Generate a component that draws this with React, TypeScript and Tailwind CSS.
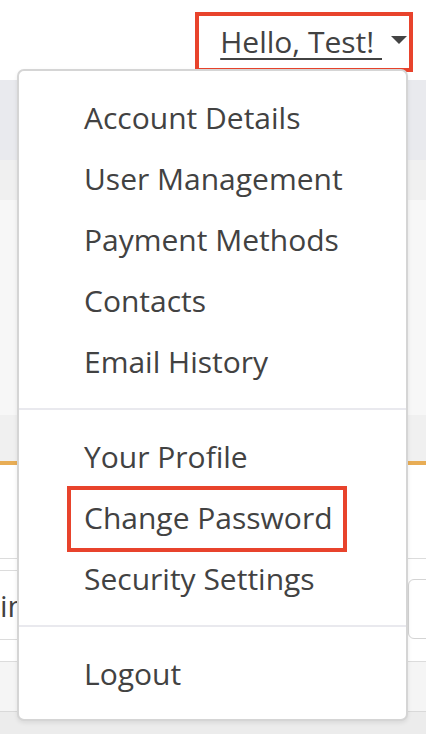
import React from 'react';

const groups: string[][] = [
  ['Account Details', 'User Management', 'Payment Methods', 'Contacts', 'Email History'],
  ['Your Profile', 'Change Password', 'Security Settings'],
  ['Logout'],
];

const App: React.FC = () => {
  return (
    <div
      className="relative w-[426px] h-[734px] overflow-hidden bg-white text-[#424242]"
      style={{ fontFamily: '"Open Sans", "Noto Sans", sans-serif' }}
    >
      {/* Page behind the menu */}
      <div className="flex flex-col h-full">
        <header className="h-[80px] flex items-start justify-end pr-[13px] pt-[12px] bg-white">
          <button className="relative flex items-center gap-[9px] h-[60px] pl-[25px] pr-[6px]">
            <span className="text-[30px] leading-none underline underline-offset-[5px] decoration-[2px] whitespace-pre">Hello, Test! </span>
            <svg width="16" height="8" viewBox="0 0 16 8" className="mb-[4px]">
              <path d="M0 0 L16 0 L8 8 Z" fill="#444" />
            </svg>
            <span className="absolute inset-0 border-[4px] border-[#e8432c]" />
          </button>
        </header>
        <div className="h-[80px] bg-[#e9eaee]" />
        <div className="h-[40px] bg-[#f0f0f0]" />
        <div className="h-[215px] bg-[#f7f7f7]" />
        <div className="h-[50px] bg-[#f0f0f0] border-b-[4px] border-[#e8ad55]" />
        <div className="h-[93px] bg-white" />
        <div className="h-[104px] bg-white border-y border-[#dcdcdc] flex justify-between items-start pt-[11px]">
          <div className="w-[60px] h-[70px] -ml-[40px] border-y border-[#dcdcdc] flex items-center text-[30px] pl-[40px]">in</div>
          <div className="w-[30px] h-[60px] mt-[9px] -mr-[12px] border border-[#d4d4d4] rounded-[6px]" />
        </div>
        <div className="h-[49px] bg-[#f5f5f5]" />
        <div className="flex-1 bg-[#ececec] border-t border-[#d9d9d9]" />
      </div>

      {/* Dropdown menu */}
      <div className="absolute left-[17px] top-[69px] w-[391px] h-[652px] bg-white border-2 border-[#d5d5d5] rounded-[7px] shadow-[0_2px_4px_rgba(0,0,0,0.08)]">
        {groups.map((items, gi) => (
          <div key={gi} className={gi > 0 ? 'border-t-2 border-[#e9e9ee] py-[16px]' : 'py-[16px]'}>
            {items.map(item => (
              <div key={item} className="h-[61px] flex items-center pl-[65px] text-[30px] leading-none">
                {item === 'Change Password' ? (
                  <span className="relative">
                    {item}
                    <span className="absolute -left-[17px] -right-[14px] -top-[17px] -bottom-[19px] border-[4px] border-[#e8432c]" />
                  </span>
                ) : (
                  item
                )}
              </div>
            ))}
          </div>
        ))}
      </div>
    </div>
  );
};

export default App;
